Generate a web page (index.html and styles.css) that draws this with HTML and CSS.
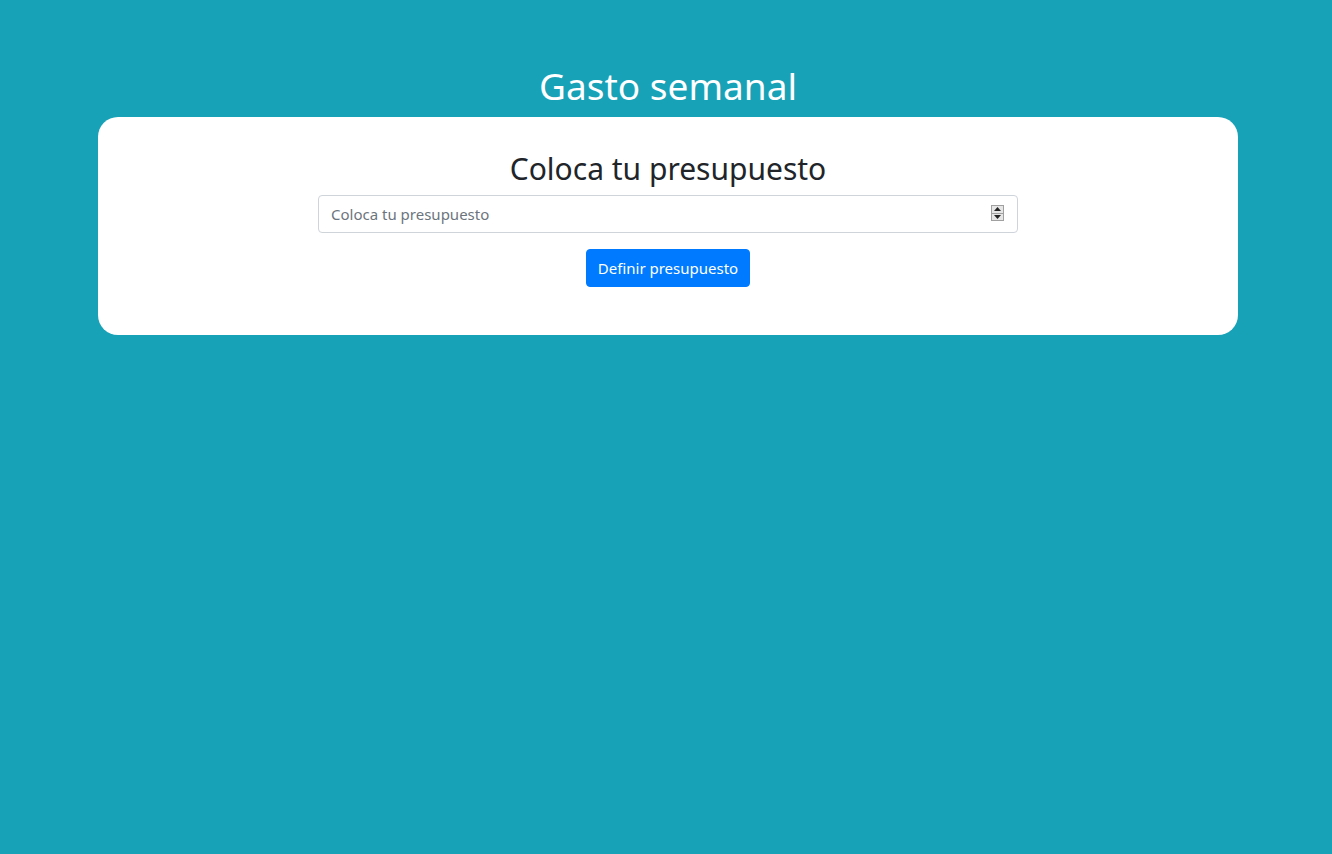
FILE: index.html
```html
<!DOCTYPE html>
<html lang="es">
<head>
<meta charset="utf-8">
<title>Gasto semanal</title>
<link rel="stylesheet" href="styles.css">
</head>
<body>
<div class="container">
  <header class="header">
    <h1 class="title">Gasto semanal</h1>
  </header>
  <main class="card">
    <h2 class="card-title">Coloca tu presupuesto</h2>
    <form class="form">
      <div class="input-wrap">
        <input class="input" type="text" placeholder="Coloca tu presupuesto">
        <span class="spinner" aria-hidden="true">
          <span class="spin-btn"><svg width="7" height="4" viewBox="0 0 7 4"><path d="M0 4 L3.5 0 L7 4 Z" fill="#222"/></svg></span>
          <span class="spin-btn"><svg width="7" height="4" viewBox="0 0 7 4"><path d="M0 0 L3.5 4 L7 0 Z" fill="#222"/></svg></span>
        </span>
      </div>
      <button class="btn" type="button">Definir presupuesto</button>
    </form>
  </main>
</div>
</body>
</html>
```
FILE: styles.css
```css
html, body {
  margin: 0;
  padding: 0;
}
body {
  background: #17a2b8;
  font-family: "Noto Sans", "Open Sans", sans-serif;
  color: #212529;
  min-height: 854px;
  padding-left: 4px;
}
.container {
  width: 1140px;
  margin: 0 auto;
}
.header {
  padding-top: 62px;
}
.title {
  margin: 0 0 7px;
  font-size: 37px;
  font-weight: 400;
  line-height: 48px;
  color: #fff;
  text-align: center;
}
.card {
  background: #fff;
  border-radius: 20px;
  padding: 33px 0 32px;
  display: flex;
  flex-direction: column;
  align-items: center;
}
.card-title {
  margin: 0 0 7px;
  font-size: 30px;
  font-weight: 400;
  line-height: 38px;
  text-align: center;
}
.form {
  display: flex;
  flex-direction: column;
  align-items: center;
  width: 700px;
}
.input-wrap {
  position: relative;
  width: 700px;
  margin-bottom: 16px;
}
.input {
  box-sizing: border-box;
  width: 100%;
  height: 38px;
  padding: 6px 12px;
  border: 1px solid #ced4da;
  border-radius: 4px;
  font-family: inherit;
  font-size: 15px;
  color: #495057;
  outline: none;
}
.input::placeholder {
  color: #6c757d;
}
.spinner {
  position: absolute;
  right: 14px;
  top: 10px;
  width: 13px;
  height: 16px;
  display: flex;
  flex-direction: column;
  border: 1px solid #a0a0a0;
  box-sizing: border-box;
  background: #e6e6e6;
}
.spin-btn {
  flex: 1;
  display: flex;
  align-items: center;
  justify-content: center;
}
.spin-btn + .spin-btn {
  border-top: 1px solid #a0a0a0;
}
.btn {
  height: 38px;
  padding: 0 11px;
  background: #007bff;
  border: 1px solid #007bff;
  border-radius: 4px;
  color: #fff;
  font-family: inherit;
  font-size: 15px;
  margin-bottom: 16px;
}
```
